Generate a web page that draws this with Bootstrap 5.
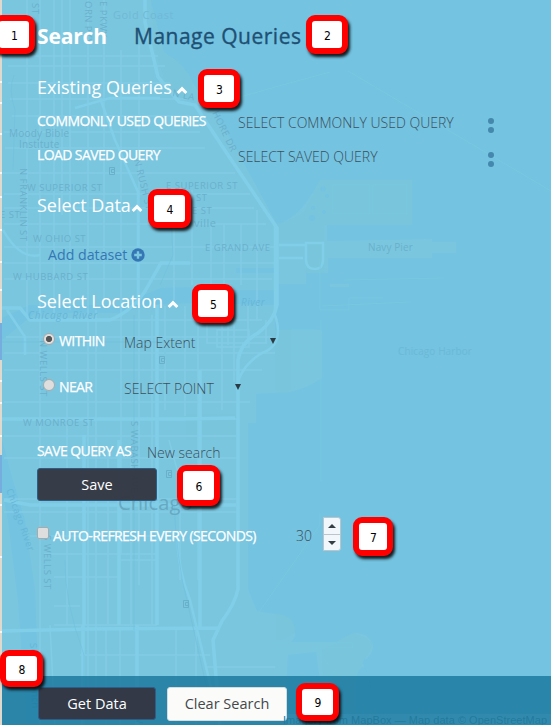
<!DOCTYPE html>
<html lang="en">
<head>
<meta charset="utf-8">
<meta name="viewport" content="width=device-width, initial-scale=1">
<title>Search</title>
<link rel="stylesheet" href="https://cdn.jsdelivr.net/npm/bootstrap@5.3.0/dist/css/bootstrap.min.css">
<style>
body{font-family:"Open Sans","Noto Sans",sans-serif;background:#73c3e1;color:#fff;font-size:14px;line-height:20px}
.screen{width:551px;height:725px}
.backdrop{left:0;top:0;z-index:0}
.backdrop text{font-family:"Open Sans","Noto Sans",sans-serif;font-size:9.5px;fill:#6bb0cb;letter-spacing:.5px}
.panel{z-index:1;padding-left:37px}
.tabs-row{height:72px;font-size:21px;font-weight:600}
.tab-search{width:97px;font-weight:700;font-size:21px;letter-spacing:-.15px}
.tab-manage{color:#1f4f73;font-weight:500;letter-spacing:.5px;-webkit-text-stroke:.35px #1f4f73}
.sect{height:32px;font-size:18px;font-weight:400}
.line{height:34px}
.lab{font-size:14px;letter-spacing:-.6px;font-weight:400;-webkit-text-stroke:.25px #fff;white-space:nowrap}
.lab-query{width:201px}
.val{font-weight:300;color:#3d4f5a;white-space:nowrap}
.val-query{width:250px}
.val-query,.val-opt{padding-top:3px}
.dotpair i{display:block;width:6px;height:6px;border-radius:50%;background:#4488ad;margin:1px 0 2.5px}
.dotpair{padding-top:10px}
.add-link{color:#3577b4;font-size:14.2px;margin-left:11px;text-decoration:none}
.opt{height:46px;padding-left:6px}
.opt-lab{width:65px}
.radio-dot{width:12px;height:12px;border-radius:50%;background:#dedede;border:1px solid #a9a9a9;margin:0 4px 4px 0}
.radio-on{background:radial-gradient(circle,#555 0 2.7px,#dedede 3.5px)}
.check-box{width:12px;height:12px;background:#dedede;border:1px solid #a6abad;border-radius:2px;margin:0 4px 2px 0}
.tri{width:0;height:0;border:3px solid transparent;border-top:6px solid #2b3b44;border-bottom:0}
.act{border-radius:3px;font-size:14.5px;height:33px;width:120px;line-height:20px;padding:0}
.act-dark,.act-dark:hover{background:rgba(52,54,67,.96);color:#fff;border:1px solid #2f5d86}
.act-light,.act-light:hover{background:#fbfbfa;color:#44484b;border:1px solid #d5dcde;height:34px;margin-left:11px}
.foot .act-dark{width:118px}
.spin{width:18px;height:34px;background:#f2f7fb;border:1px solid #bcc5cb;border-radius:0 3px 3px 0}
.spin div{height:16px}
.spin div+div{border-top:1px solid #bcc5cb}
.spin-up,.spin-down{width:0;height:0;border:4px solid transparent}
.spin-up{border-bottom-color:#333f45;border-top:0}
.spin-down{border-top-color:#333f45;border-bottom:0}
.foot{left:2px;right:0;bottom:0;height:49px;padding-left:36px;z-index:1;background:rgba(15,110,150,.74);padding-top:6px}
.callout-no{position:absolute;z-index:2;width:42px;height:39px;border:6px solid #f00;border-radius:9px;background:#fff;color:#000;font:12px/27px "DejaVu Sans Condensed","DejaVu Sans",sans-serif;display:flex;justify-content:center;align-items:center;padding:3px 0 0 1px;box-shadow:2px 3px 3px rgba(0,0,0,.85)}
.no1{left:-7px;top:15px}.no2{left:306px;top:15px}.no3{left:198px;top:69px}
.no4{left:148px;top:189px;width:43px}.no5{left:192px;top:284px}
.no6{left:177px;top:465px;width:43px;height:41px}.no7{left:353px;top:517px;width:40px}
.no8{left:0;top:650px;width:43px;height:37px}.no9{left:296px;top:683px;width:43px;height:38px}
</style>
<script src="https://cdn.jsdelivr.net/npm/bootstrap@5.3.0/dist/js/bootstrap.bundle.min.js"></script>
</head>
<body>
<div class="screen position-relative overflow-hidden">
<svg class="backdrop position-absolute" width="551" height="725" viewBox="0 0 551 725" fill="none">
  <!-- land, parks and piers -->
  <path fill="#7ac6df" d="M0 0H151Q154 35 164 52Q186 65 193 83L229 136L277 224Q300 219 320 180H412V225H327V241L432 239V242H456V253H432V258H328V284H349V298H326L320 318H322V378Q308 388 290 392L256 394V423H248V589L257 611L275 614L290 618Q300 635 291 642H337Q362 623 373 644Q374 656 362 661Q375 690 370 725H0Z"/>
  <path fill="#78c5dc" d="M151 0L164 52Q186 65 193 83L188 98L170 96L155 50ZM320 180H412V225H324V290H306V240H277V224Q293 220 304 212ZM186 414H240V440H186ZM275 320H291V390Q282 396 275 388ZM276 614Q295 614 295 632Q285 640 280 640H276ZM337 643Q354 625 373 644L362 664L340 725H325L322 650Z"/>
  <path fill="#73c3e1" d="M278 284H306V273H330V287H349V318H322V330H275V294ZM161 288Q200 286 222 290H275V305L200 303L155 304L120 313H35L2 340V318L30 305H120ZM236 268H276V273H236ZM2 440Q12 480 25 520L35 590L40 725H27L18 600L8 520L2 490ZM288 655L316 652L326 725H284Z"/>
  <!-- minor street grid -->
  <g stroke="#82cce6" stroke-width="1.5">
    <path d="M8 56H158M8 66H165M8 83H170M10 99H187M12 116H190M4 132H200M5 148H205M3 173H235M4 194H250M4 208H254M4 224H266M4 247H275M4 263H275M4 279H272M28 320H262M6 337H272M4 353H275M4 370H262M4 402H250M6 419H237M4 436H236M4 458H238M4 499H237M4 512H237M30 536H157M120 560H157M44 554H157M54 577H120M54 606H80M54 625H157M80 655H210M205 667H275"/>
    <path d="M27 0V315M40 0V725M54 0V315M70 0V310M88 0V720M104 0V300M121 50V555M139 45V585M174 190V300M192 190V285M211 224V286M224 224V285M241 224V285M257 210V320M165 306V410M185 306V416M198 306V580M222 308V410M234 305V382"/>
    <path d="M62 0V215M96 310V720M108 450V624M131 450V624M152 315V625M169 440L180 480V580M67 350V625M176 627V725M196 627V725M50 625L55 725M120 630V725M106 630V725M228 305V345M248 305V342M207 325V343H266V320M217 330H249V347H217Z"/>
  </g>
  <!-- main roads -->
  <g stroke="#81cee9" stroke-width="3.5">
    <path d="M145 0V22L158 77L179 102L195 105L228 155L277 228V305Q274 321 258 333Q241 342 238 360V589Q235 604 222 621L213 640L220 725M2 631L90 629L218 628M83 625V725M157 305V625M119 440V625M2 308H20L30 320H110Q135 310 148 286L161 263H190M84 435V625M137 625V725M200 370V628M2 419H180L235 418M4 500L30 505H236"/>
    <path stroke-width="2.5" d="M100 98L115 140L138 192V305M279 245H306M279 258H303M306 243H323V259Q323 269 315 269Q306 269 306 259ZM275 224V315Q285 345 262 353Q238 368 237 390M3 230Q20 260 40 255M160 98H110L75 108M177 535Q178 570 190 600L220 725M7 310L25 337V355"/>
  </g>
  <g stroke="#6dbdd9" stroke-width="1" opacity=".5">
    <path d="M14 75Q8 90 15 110L13 170M2 342H165V360M65 560Q64 600 84 655V725M174 500Q176 560 188 605L215 725M134 315V630M171 220L173 255L160 285"/>
  </g>
  <g stroke="#79c8df"><path d="M275 87L330 72M348 71L551 191V410M240 97L275 87M320 260V310H349V298H383M343 280L443 278M322 306L410 302M321 320V481M257 615L320 525V513M275 643H353V648H275M321 645V655L334 672L328 680M292 330H315M292 338H315M292 346H315M292 354H315M292 362H315M292 370H315M333 185H370V214H333ZM373 185H407V214H373Z"/></g>
  <ellipse cx="363" cy="696" rx="8" ry="29" fill="#73c3e1"/>
  <g fill="#73c3e1"><circle cx="323" cy="189" r="2.5"/><circle cx="327" cy="196" r="2"/><circle cx="313" cy="208" r="2"/><circle cx="324" cy="212" r="2"/><circle cx="312" cy="218" r="3"/></g>
  <!-- map labels -->
  <g>
    <text x="113" y="19" style="font-size:11px;fill:#71b9d5">Gold Coast</text><text x="9" y="137" style="font-size:10px;letter-spacing:.2px">Moody Bible</text><text x="19" y="148" style="font-size:10px;letter-spacing:.2px">Institute</text>
    <text x="27" y="191">W SUPERIOR ST</text><text x="166" y="189">E SUPERIOR ST</text><text x="196" y="201">ST</text><text x="192" y="214">E ST</text><text x="194" y="227" style="font-size:11px">ville</text>
    <text x="0" y="218">E ST</text><text x="33" y="242">W OHIO ST</text><text x="205" y="251">E GRAND AVE</text><text x="13" y="280">W HUBBARD ST</text>
    <text x="28" y="319" style="font-size:10px;font-style:italic;fill:#67b6d8;letter-spacing:.8px">Chicago River</text><text x="241" y="306" style="font-size:10px;font-style:italic;fill:#67b6d8">River</text><text x="23" y="426">W MONROE ST</text>
    <text x="368" y="251" style="font-size:10px;letter-spacing:.1px">Navy Pier</text><text x="398" y="355" style="font-size:10px;fill:#6db8d5;letter-spacing:.1px">Chicago Harbor</text><text x="118" y="510" style="font-size:20px;fill:#67a9c1;letter-spacing:.2px">Chicago</text>
    <text transform="translate(32 3) rotate(90)">ST</text><text transform="translate(85 1) rotate(90)">ORN PKY</text><text transform="translate(100 1) rotate(90)">E PKWY</text>
    <text transform="translate(172 96) rotate(12)">N LA</text><text transform="translate(212 113) rotate(64)">HORE DR</text><text transform="translate(134 160) rotate(76)">N RUSH ST</text><text transform="translate(20 168) rotate(90)">N FRANKLIN ST</text>
    <text transform="translate(40 340) rotate(90)">N WELLS ST</text><text transform="translate(131 421) rotate(90)">S WABASH AVE</text><text transform="translate(44 535) rotate(90)">S WELLS ST</text><text transform="translate(6 490) rotate(70)" style="fill:#67b6d8">Chicago River</text><text transform="translate(30 643) rotate(88)" style="fill:#67b6d8">South Branch</text>
    <text transform="translate(136 706) rotate(90)">S W</text>
  </g>
  <!-- transit stations -->
  <g stroke="#6bb0cb"><path d="M109.500 167.500h5v7h-5zM111.500 169.500h3v3h-3zM159.500 356.500h5v7h-5zM161.500 358.500h3v3h-3zM166.500 470.500h5v7h-5zM168.500 472.500h3v3h-3zM183.500 600.500h5v7h-5zM185.500 602.500h3v3h-3z"/></g>
  <!-- uncovered sliver of the base map -->
  <path fill="#ded8cd" d="M0 0H2V725H0Z"/><path fill="#75aede" d="M0 323H2V360H0ZM0 455H2V493H0Z"/><path stroke="#f7f6f2" stroke-width="2" d="M0 82H2M0 103H2M0 134H2M0 173H2M0 197H2M0 230H2M0 262H2M0 290H2M0 381H2M0 403H2M0 436H2M0 505H2M0 557H2M0 632H2"/>
</svg>

<main class="panel position-relative d-flex flex-column">
  <div class="tabs-row d-flex align-items-center"><div class="tab-search">Search</div><div class="tab-manage">Manage Queries</div></div>
  <h2 class="sect d-flex align-items-center m-0">Existing Queries<svg class="ms-1 mt-1" width="12" height="9" viewBox="0 0 12 9"><path d="M1.700 7L6 2.700L10.300 7" fill="none" stroke="#fff" stroke-width="3"/></svg></h2>
  <div class="line d-flex align-items-center"><div class="lab lab-query">COMMONLY USED QUERIES</div><div class="val val-query">SELECT COMMONLY USED QUERY</div><div class="dotpair"><i></i><i></i></div></div>
  <div class="line d-flex align-items-center"><div class="lab lab-query">LOAD SAVED QUERY</div><div class="val val-query">SELECT SAVED QUERY</div><div class="dotpair"><i></i><i></i></div></div>
  <h2 class="sect d-flex align-items-center m-0 mt-3 pt-1">Select Data<svg class="mt-1" width="12" height="9" viewBox="0 0 12 9"><path d="M1.700 7L6 2.700L10.300 7" fill="none" stroke="#fff" stroke-width="3"/></svg></h2>
  <div class="line d-flex align-items-center mt-3 pt-1"><a class="add-link" href="#">Add dataset</a><svg class="ms-1" width="14" height="14" viewBox="0 0 14 14"><circle cx="7" cy="7" r="6.7" fill="#3577b4"/><path d="M7 3.2V10.8M3.2 7H10.8" stroke="#7cc7e1" stroke-width="2.4"/></svg></div>
  <h2 class="sect d-flex align-items-center m-0 mt-3">Select Location<svg class="ms-1 mt-1" width="12" height="9" viewBox="0 0 12 9"><path d="M1.700 7L6 2.700L10.300 7" fill="none" stroke="#fff" stroke-width="3"/></svg></h2>
  <div class="opt d-flex align-items-center"><span class="radio-dot radio-on"></span><span class="lab opt-lab">WITHIN</span><span class="val val-opt flex-shrink-0" style="width:146px">Map Extent</span><span class="tri"></span></div>
  <div class="opt d-flex align-items-center"><span class="radio-dot"></span><span class="lab opt-lab">NEAR</span><span class="val val-opt flex-shrink-0" style="width:111px">SELECT POINT</span><span class="tri"></span></div>
  <div class="line d-flex align-items-center mt-4"><span class="lab" style="width:110px">SAVE QUERY AS</span><span class="val val-opt">New search</span></div>
  <button class="btn act act-dark">Save</button>
  <div class="line d-flex align-items-center mt-3"><span class="check-box"></span><span class="lab pt-1" style="width:243px">AUTO-REFRESH EVERY (SECONDS)</span><span class="val val-opt" style="width:27px">30</span>
    <div class="spin"><div class="d-flex align-items-center justify-content-center"><i class="spin-up"></i></div><div class="d-flex align-items-center justify-content-center"><i class="spin-down"></i></div></div></div>
</main>

<footer class="foot position-absolute d-flex align-items-center">
  <button class="btn act act-dark">Get Data</button><button class="btn act act-light">Clear Search</button>
</footer>
<svg class="position-absolute" style="left:240px;top:712px;z-index:1" width="311" height="13"><rect x="47" y="2" width="264" height="11" fill="#3b90b3" opacity=".45"/><text x="43" y="12" font-family="Liberation Sans, sans-serif" font-size="11" textLength="264" fill="#237a9c">Imagery from MapBox — Map data © OpenStreetMap</text></svg>

<span class="callout-no no1">1</span><span class="callout-no no2">2</span><span class="callout-no no3">3</span><span class="callout-no no4">4</span><span class="callout-no no5">5</span><span class="callout-no no6">6</span><span class="callout-no no7">7</span><span class="callout-no no8">8</span><span class="callout-no no9">9</span>
</div>
</body>
</html>
